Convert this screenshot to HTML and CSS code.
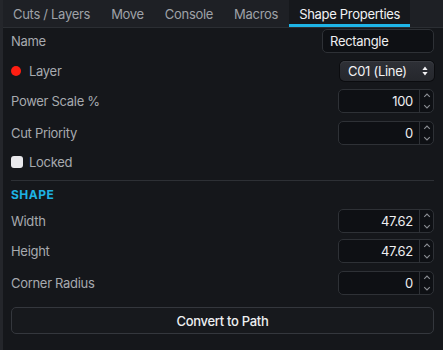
FILE: index.html
```html
<!DOCTYPE html>
<html>
<head>
<meta charset="utf-8">
<link rel="stylesheet" href="styles.css">
</head>
<body>
<div class="panel">
  <nav class="tabs">
    <div class="tab">Cuts / Layers</div>
    <div class="tab">Move</div>
    <div class="tab">Console</div>
    <div class="tab">Macros</div>
    <div class="tab active">Shape Properties</div>
  </nav>
  <div class="content">
    <div class="row">
      <span class="label">Name</span>
      <div class="text-input">Rectangle</div>
    </div>
    <div class="row">
      <span class="label with-mark"><span class="dot"></span>Layer</span>
      <div class="select">
        <span>C01 (Line)</span>
        <svg class="select-arrows" width="6" height="10" viewBox="0 0 6 10"><path d="M3 0.5 L5.6 4 L0.4 4 Z M3 9.5 L5.6 6 L0.4 6 Z" fill="#f2f2f4"/></svg>
      </div>
    </div>
    <div class="row">
      <span class="label">Power Scale %</span>
      <div class="num-input"><span class="num-value">100</span><span class="spin"><svg width="8" height="18" viewBox="0 0 8 18"><path d="M1.2 4.8 L4 2 L6.8 4.8 M1.2 13.2 L4 16 L6.8 13.2" fill="none" stroke="#8b8e94" stroke-width="1.1"/></svg></span></div>
    </div>
    <div class="row row-shift">
      <span class="label">Cut Priority</span>
      <div class="num-input"><span class="num-value">0</span><span class="spin"><svg width="8" height="18" viewBox="0 0 8 18"><path d="M1.2 4.8 L4 2 L6.8 4.8 M1.2 13.2 L4 16 L6.8 13.2" fill="none" stroke="#8b8e94" stroke-width="1.1"/></svg></span></div>
    </div>
    <div class="row row-check">
      <span class="label with-check"><span class="checkbox"></span>Locked</span>
    </div>
    <div class="divider"></div>
    <div class="section-title">SHAPE</div>
    <div class="row">
      <span class="label">Width</span>
      <div class="num-input"><span class="num-value">47.62</span><span class="spin"><svg width="8" height="18" viewBox="0 0 8 18"><path d="M1.2 4.8 L4 2 L6.8 4.8 M1.2 13.2 L4 16 L6.8 13.2" fill="none" stroke="#8b8e94" stroke-width="1.1"/></svg></span></div>
    </div>
    <div class="row">
      <span class="label">Height</span>
      <div class="num-input"><span class="num-value">47.62</span><span class="spin"><svg width="8" height="18" viewBox="0 0 8 18"><path d="M1.2 4.8 L4 2 L6.8 4.8 M1.2 13.2 L4 16 L6.8 13.2" fill="none" stroke="#8b8e94" stroke-width="1.1"/></svg></span></div>
    </div>
    <div class="row row-shift">
      <span class="label">Corner Radius</span>
      <div class="num-input"><span class="num-value">0</span><span class="spin"><svg width="8" height="18" viewBox="0 0 8 18"><path d="M1.2 4.8 L4 2 L6.8 4.8 M1.2 13.2 L4 16 L6.8 13.2" fill="none" stroke="#8b8e94" stroke-width="1.1"/></svg></span></div>
    </div>
    <button class="button">Convert to Path</button>
  </div>
</div>
</body>
</html>
```
FILE: styles.css
```css
* { box-sizing: border-box; }
html, body {
  margin: 0;
  padding: 0;
  background: #15171b;
  font-family: Inter, "Noto Sans", sans-serif;
  font-size: 13px;
  letter-spacing: -0.3px;
}
.panel {
  height: 350px;
  border-left: 3px solid #24262b;
  background: #15171b;
}
.tabs {
  display: flex;
  gap: 1px;
  height: 28px;
  background: #1e2025;
  border-bottom: 1px solid #2b2e33;
}
.tab {
  height: 27px;
  padding: 4px 10px 0;
  border-bottom: 3px solid transparent;
  color: #9fa2a8;
  line-height: 20px;
  white-space: nowrap;
}
.tab.active {
  background: #16181c;
  color: #f1f2f4;
  border-bottom-color: #1eb4e6;
}
.content {
  display: flex;
  flex-direction: column;
  gap: 6px;
  padding: 1px 9px 0 8px;
}
.row {
  display: flex;
  align-items: center;
  justify-content: space-between;
  height: 24px;
}
.row-shift { margin-top: 2px; }
.row-check { margin-top: -1px; height: 24px; }
.label {
  color: #a7aaaf;
  line-height: 16px;
}
.with-mark, .with-check {
  display: flex;
  align-items: center;
}
.dot {
  width: 10px;
  height: 10px;
  border-radius: 50%;
  background: #ff1e12;
  margin-right: 8px;
}
.checkbox {
  width: 12px;
  height: 12px;
  border-radius: 3px;
  background: #e9e9ec;
  margin-right: 6px;
}
.text-input {
  width: 112px;
  height: 24px;
  border: 1px solid #2e3136;
  border-radius: 5px;
  background: #0e1014;
  color: #eeeff1;
  padding: 0 7px;
  line-height: 22px;
}
.select {
  width: 94px;
  height: 20px;
  border-radius: 5px;
  background: linear-gradient(#2e3036, #25272c);
  box-shadow: 0 0 0 1px #0b0c0f, inset 0 1px 0 #3a3c42;
  color: #f2f2f4;
  display: flex;
  align-items: center;
  justify-content: space-between;
  padding: 0 6px 0 8px;
  line-height: 20px;
}
.select-arrows { display: block; }
.num-input {
  width: 96px;
  height: 24px;
  border: 1px solid #2e3136;
  border-radius: 5px;
  background: #0e1014;
  display: flex;
}
.num-value {
  flex: 1;
  text-align: right;
  color: #eeeff1;
  padding-right: 6px;
  line-height: 22px;
}
.spin {
  width: 14px;
  border-left: 1px solid #2e3136;
  display: flex;
  align-items: center;
  justify-content: center;
}
.spin svg { display: block; }
.divider {
  height: 1px;
  background: #2d3035;
}
.section-title {
  color: #1eb1e3;
  font-weight: 700;
  font-size: 12px;
  letter-spacing: 0.5px;
  line-height: 16px;
}
.button {
  margin-top: 6px;
  height: 27px;
  border: 1px solid #34373d;
  border-radius: 5px;
  background: #17191d;
  color: #eeeff1;
  font-family: Inter, "Noto Sans", sans-serif;
  font-size: 13px;
  font-weight: 500;
  letter-spacing: -0.3px;
}
```
